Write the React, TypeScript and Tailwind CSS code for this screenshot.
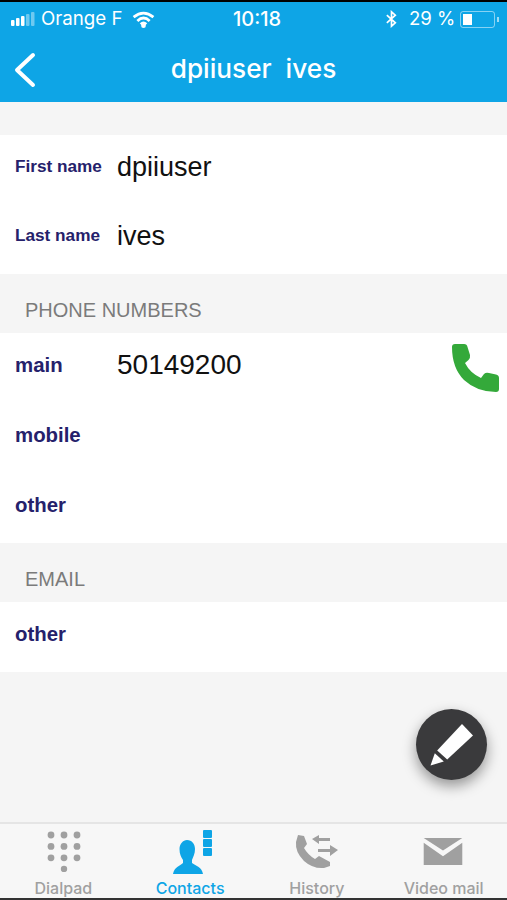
function Row({ label, value, small, children }: { label: string; value?: string; small?: boolean; children?: React.ReactNode }) {
  return (
    <div className={`relative flex items-center pb-[6px] ${small ? "h-[69.5px]" : "h-[70px]"}`}>
      <span className={`w-[117px] shrink-0 pl-[15px] font-bold text-[#25216b] ${small ? "text-[17.2px]" : "text-[20.4px]"}`}>{label}</span>
      {value && <span className={`text-[#111111] ${small ? "text-[27px]" : "text-[28px]"}`}>{value}</span>}
      {children}
    </div>
  );
}

function SectionTitle({ title }: { title: string }) {
  return (
    <div className="flex h-[59px] items-end pb-[10px] pl-[25px] text-[20px] leading-[26px] text-[#7b7b7b]">{title}</div>
  );
}

function Tab({ label, active, children }: { label: string; active?: boolean; children: React.ReactNode }) {
  return (
    <div className={`flex w-[126.75px] flex-col items-center ${active ? "text-[#0ea5e6]" : "text-[#a0a0a0]"}`}>
      <div className="flex h-[54px] items-end justify-center">{children}</div>
      <span className="font-['Inter',sans-serif] text-[16px] font-medium leading-[20px]">{label}</span>
    </div>
  );
}

export default function App() {
  return (
    <div className="flex h-[900px] w-[507px] flex-col overflow-hidden bg-[#f5f5f5] font-['Liberation_Sans',Arial,sans-serif]">
      <div className="h-[2px] bg-black" />
      <header className="h-[100px] bg-[#0ea5e6] text-white">
        <div className="relative flex h-[34px] items-center">
          <svg width="26" height="16" viewBox="0 0 26 16" className="ml-[10px] mr-[5px]">
            <rect x="1" y="9" width="3.5" height="6" rx="1" fill="#fff" />
            <rect x="6" y="7" width="3.5" height="8" rx="1" fill="#fff" />
            <rect x="11" y="5" width="3.5" height="10" rx="1" fill="#fff" />
            <rect x="16" y="3" width="3.5" height="12" rx="1" fill="#fff" opacity="0.4" />
            <rect x="21" y="1" width="3.5" height="14" rx="1" fill="#fff" opacity="0.4" />
          </svg>
          <span className="text-[18.7px] font-['Inter',sans-serif] font-normal">Orange F</span>
          <svg width="23" height="17" viewBox="0 0 24 18" className="ml-[9px]" fill="none" stroke="#fff" strokeWidth="3">
            <path d="M1.5 6.5 Q12 -2 22.5 6.5" />
            <path d="M5.5 10.5 Q12 4.5 18.5 10.5" />
            <path d="M9 14 Q12 11.5 15 14" />
            <circle cx="12" cy="15.5" r="1" fill="#fff" />
          </svg>
          <span className="absolute left-[233px] text-[20px] font-['Inter',sans-serif] font-medium">10:18</span>
          <svg width="11" height="18" viewBox="0 0 13 20" className="absolute left-[386px]" fill="none" stroke="#fff" strokeWidth="2">
            <path d="M1 5.5 L11 14.5 L6.5 18.5 V1.5 L11 5.5 L1 14.5" />
          </svg>
          <span className="absolute left-[409px] text-[18.6px] font-['Inter',sans-serif]">29 %</span>
          <div className="absolute left-[460px] flex h-[17px] w-[35px] items-center rounded-[3px] border border-white/50 p-[2px]">
            <div className="h-full w-[9px] bg-white" />
          </div>
          <div className="absolute left-[497px] h-[5px] w-[1.5px] bg-white/60" />
        </div>
        <div className="relative flex h-[66px] items-center justify-center">
          <svg width="22" height="36" viewBox="0 0 22 36" className="absolute left-[14px] top-[16px]" fill="none" stroke="#fff" strokeWidth="4" strokeLinecap="round" strokeLinejoin="round">
            <path d="M19 3 L3 18 L19 33" />
          </svg>
          <span className="text-[26.2px] font-['Inter',sans-serif] font-medium leading-none whitespace-pre">dpiiuser  ives</span>
        </div>
      </header>

      <div className="mt-[33px] bg-white">
        <Row small label="First name" value="dpiiuser" />
        <Row small label="Last name" value="ives" />
      </div>

      <SectionTitle title="PHONE NUMBERS" />
      <div className="bg-white">
        <Row label="main" value="50149200">
          <svg width="48" height="48" viewBox="0 0 48 48" className="absolute left-[451px] top-[11px]" fill="#34a93a">
            <path d="M1 3 Q1 0 4 0 H13 Q16 0 16.5 3 L19 11 Q19.5 14 17.5 16 L14 19 Q19 29 30 34 L33 30 Q35 28 38 29 L45 30.5 Q48 31 48 34 V45 Q48 48 45 48 Q26 48 13 36 Q1 24 1 3 Z" />
          </svg>
        </Row>
        <Row label="mobile" />
        <Row label="other" />
      </div>

      <SectionTitle title="EMAIL" />
      <div className="bg-white">
        <Row label="other" />
      </div>

      <div className="relative flex-1">
        <div className="absolute left-[416px] top-[37px] flex h-[71px] w-[71px] items-center justify-center rounded-full bg-[#3a3a3c] shadow-[0_6px_14px_rgba(0,0,0,0.4)]">
          <svg width="44" height="44" viewBox="0 0 44 44" fill="#fff">
            <path d="M32 1 L43 12.5 L17.2 36.5 L7.2 27.5 Z" />
            <path d="M4.8 30.2 L13.8 38.5 L0.5 42.5 Z" />
          </svg>
        </div>
      </div>

      <footer className="flex h-[76px] border-t-2 border-[#e5e5e5] bg-[#f7f7f7]">
        <Tab label="Dialpad">
          <svg width="36" height="42" viewBox="0 0 36 42" fill="currentColor" className="mb-[6px] ml-[2px]">
            {[0, 1, 2].flatMap((row) =>
              [0, 1, 2].map((col) => <circle key={`${row}-${col}`} cx={5 + col * 13} cy={5 + row * 11.4} r="3.4" />)
            )}
            <circle cx="18" cy="39" r="3.2" />
          </svg>
        </Tab>
        <Tab label="Contacts" active>
          <svg width="42" height="46" viewBox="0 0 42 46" fill="currentColor" className="mb-[3px] ml-[6px]">
            <rect x="31" y="1" width="9" height="8" rx="1" />
            <rect x="31" y="10" width="9" height="8" rx="1" />
            <rect x="31" y="19" width="9" height="8" rx="1" />
            <path d="M15 11 C20 11 23 15 23 20 C23 25 21 28 20 31 L20 34 C24 37 30 38 31 45 H1 C2 38 8 37 11 34 L11 31 C9 28 7.5 25 7.5 20 C7.5 15 11 11 15 11 Z" />
          </svg>
        </Tab>
        <Tab label="History">
          <svg width="60" height="52" viewBox="0 0 60 52" fill="currentColor" className="mb-[1px] mr-[4px]">
            <path d="M13 10 L19 11 L22 19 L19 23 Q23 30 30 34 L34 31 L45 37 L45 41 L39 43 Q28 44 19 36 Q10 27 11 17 Z" />
            <path d="M27 14 L34 10 V13 H45 V16 H34 V19 Z" />
            <path d="M33 24 H45 V20 L53 25 L45 31 V27 H33 Z" />
          </svg>
        </Tab>
        <Tab label="Video mail">
          <svg width="40" height="27" viewBox="0 0 40 28" fill="currentColor" className="mb-[13px] mr-[1px]">
            <path d="M0 0 H40 L20 13 Z" />
            <path d="M0 5 L20 19 L40 5 V28 H0 Z" />
          </svg>
        </Tab>
      </footer>
      <div className="h-[2px] bg-[#333333]" />
    </div>
  );
}
